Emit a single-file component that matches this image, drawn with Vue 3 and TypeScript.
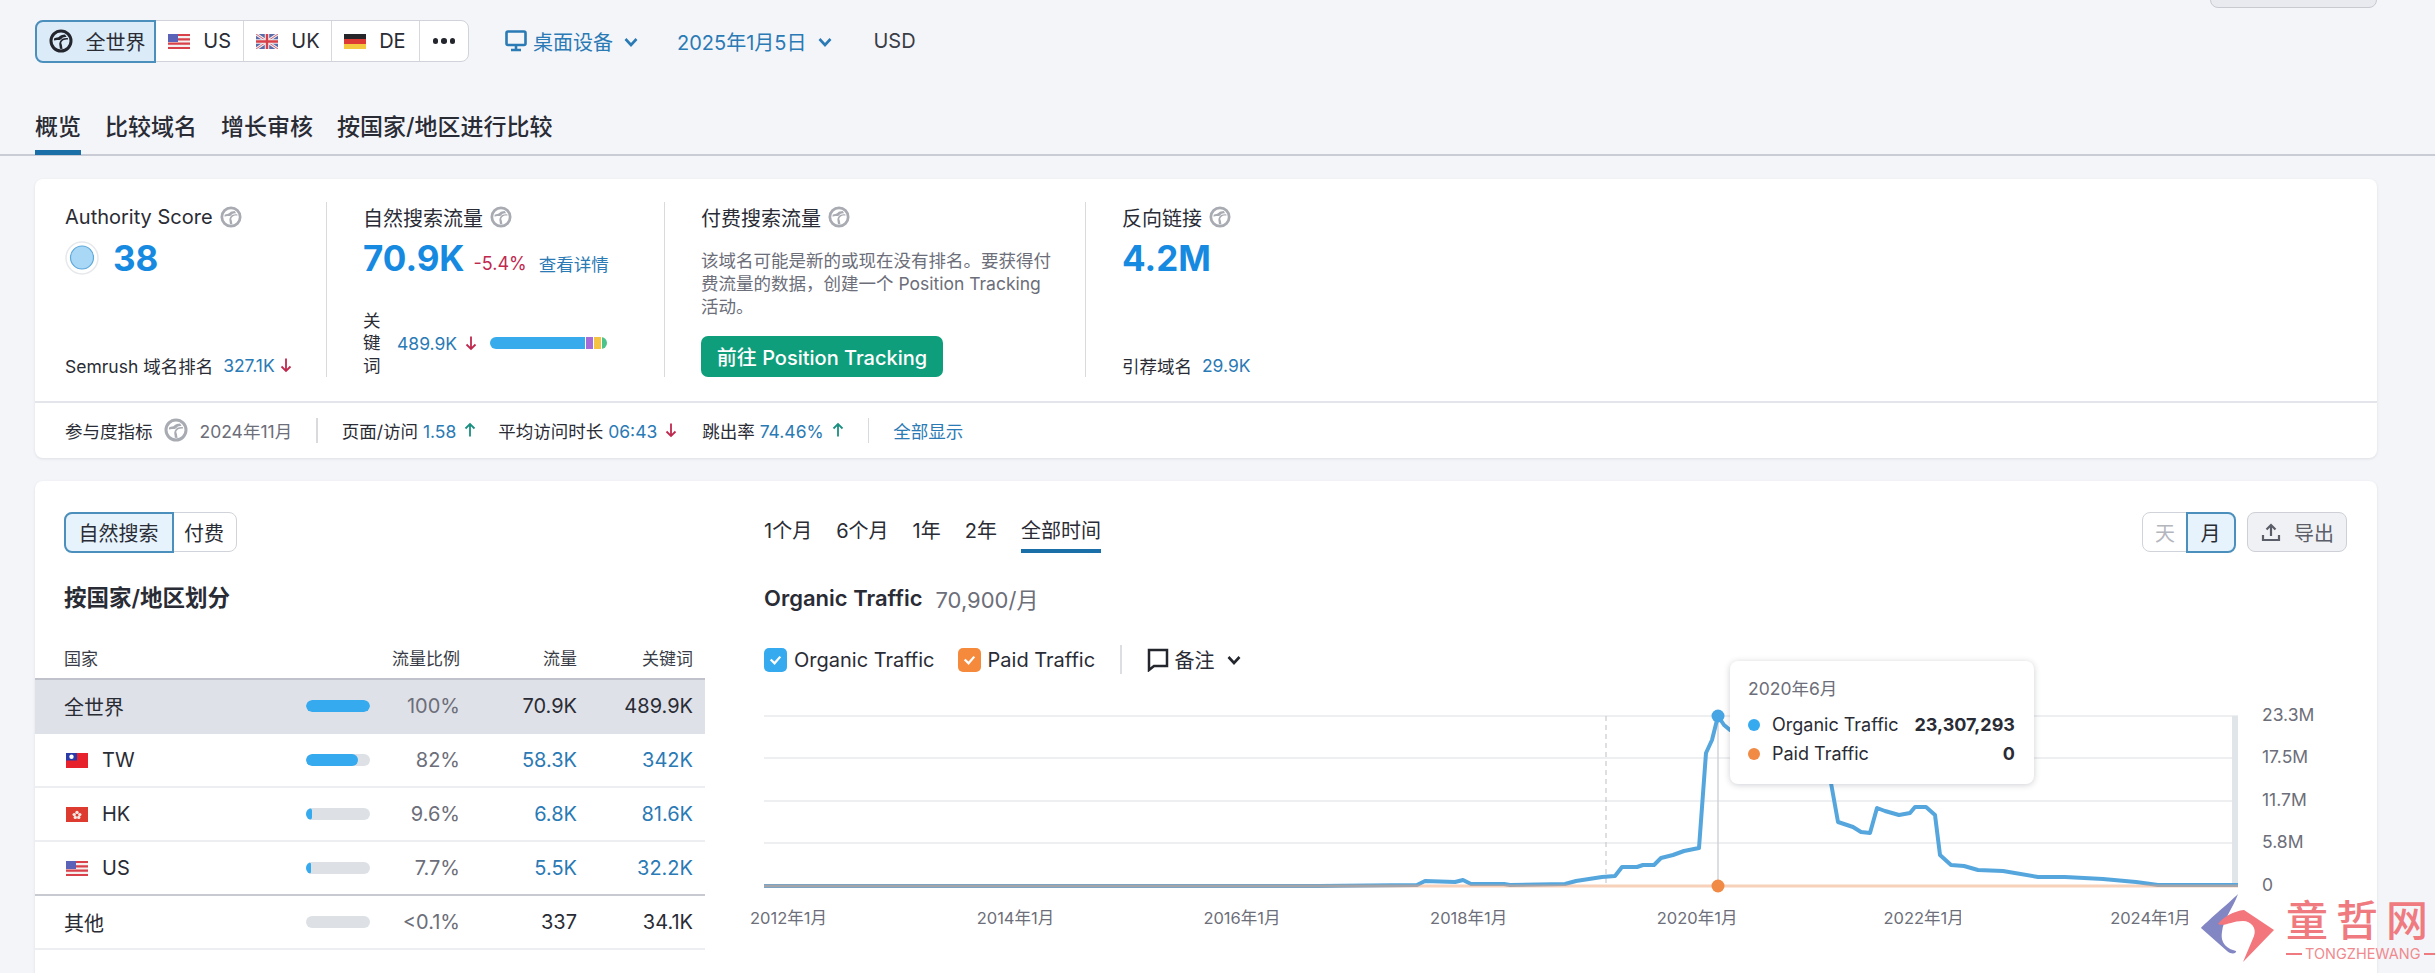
<script setup lang="ts">
interface Row { name: string; flag?: string; bar: number; pct: string; traffic: string; kw: string; link: boolean; cls?: string }

const regions = [
  { code: 'US', flag: 'us' },
  { code: 'UK', flag: 'uk' },
  { code: 'DE', flag: 'de' },
]

const rows: Row[] = [
  { name: '全世界', bar: 100, pct: '100%', traffic: '70.9K', kw: '489.9K', link: false, cls: 'selected' },
  { name: 'TW', flag: 'tw', bar: 82, pct: '82%', traffic: '58.3K', kw: '342K', link: true },
  { name: 'HK', flag: 'hk', bar: 9.6, pct: '9.6%', traffic: '6.8K', kw: '81.6K', link: true },
  { name: 'US', flag: 'us', bar: 7.7, pct: '7.7%', traffic: '5.5K', kw: '32.2K', link: true, cls: 'last' },
  { name: '其他', bar: 0, pct: '<0.1%', traffic: '337', kw: '34.1K', link: false },
]

const ranges = ['1个月', '6个月', '1年', '2年', '全部时间']

const ticks = [
  { label: '2012年1月', cut: false },
  { label: '2014年1月', cut: false },
  { label: '2016年1月', cut: false },
  { label: '2018年1月', cut: false },
  { label: '2020年1月', cut: true },
  { label: '2022年1月', cut: true },
  { label: '2024年1月', cut: true },
]

const yLabels = [
  { label: '23.3M', y: 15 },
  { label: '17.5M', y: 57 },
  { label: '11.7M', y: 100 },
  { label: '5.8M', y: 142 },
  { label: '0', y: 185 },
]
const grid = [16, 58, 101, 143]

// page coordinates of the organic series, moved into the chart's own space below
const organic: [number, number][] = [
  [764, 886], [1318, 886], [1417, 885], [1425, 881], [1455, 882], [1463, 880], [1471, 884],
  [1504, 884], [1510, 885], [1565, 884], [1576, 881], [1602, 877], [1615, 876], [1622, 867],
  [1637, 867], [1643, 865], [1654, 865], [1661, 858], [1673, 855], [1684, 851], [1699, 848],
  [1706, 753], [1712, 740], [1718, 716], [1724, 725], [1730, 730], [1780, 745], [1820, 760],
  [1831, 783], [1838, 822], [1853, 827], [1861, 832], [1870, 833], [1877, 808], [1885, 811],
  [1899, 815], [1910, 813], [1915, 807], [1926, 807], [1935, 815], [1940, 855], [1951, 865],
  [1964, 866], [1978, 870], [2003, 871], [2038, 877], [2065, 877], [2103, 879], [2136, 882],
  [2158, 885], [2238, 885],
]
const organicPath = 'M' + organic.map(([x, y]) => `${x - 764} ${y - 700}`).join('L')
</script>

<template>
  <div class="page">
    <svg class="defs" width="0" height="0" aria-hidden="true">
      <symbol id="globe" viewBox="0 0 24 24">
        <circle cx="12" cy="12" r="10" fill="none" stroke="currentColor" stroke-width="3" />
        <path d="M5 9.5c2.5-1.4 4-.4 5.6-2.2 1.4-1.6 3.200-1.200 5.400-1.800l1.600 2.500c-2 .2-3.500-.2-4.600 1.200-.8 1-2 2-4 1.800-1.600-.2-2.800.2-4 .6z" fill="currentColor" />
        <path d="M19 10.500c-2.500-.3-5 .2-6.500 2.500-.6 1 .2 2 .4 3l.6 4-2.600-.2-.6-4c-.4-2 1-4.800 3-6 2-1 4-1 5.600-.8z" fill="currentColor" />
      </symbol>
      <symbol id="us" viewBox="0 0 22 15">
        <rect width="22" height="15" fill="#f4f0f0" />
        <path d="M0 0h22v2.100H0zM0 4.300h22v2.100H0zM0 8.600h22v2.100H0zM0 12.900h22V15H0z" fill="#d8414a" />
        <rect width="10" height="8" fill="#5a63b8" />
      </symbol>
      <symbol id="uk" viewBox="0 0 22 15">
        <rect width="22" height="15" fill="#5b6aa8" />
        <path d="M0 0l22 15M22 0L0 15" stroke="#f1eef0" stroke-width="3" />
        <path d="M0 0l22 15M22 0L0 15" stroke="#d36a78" stroke-width="1" />
        <path d="M11 0v15M0 7.500h22" stroke="#f1eef0" stroke-width="4.500" />
        <path d="M11 0v15M0 7.500h22" stroke="#d8414a" stroke-width="2.400" />
      </symbol>
      <symbol id="de" viewBox="0 0 22 15">
        <rect width="22" height="5" fill="#26262a" />
        <rect y="5" width="22" height="5" fill="#dc3a32" />
        <rect y="10" width="22" height="5" fill="#f5c93f" />
      </symbol>
      <symbol id="tw" viewBox="0 0 22 15">
        <rect width="22" height="15" fill="#e8222c" />
        <rect width="11" height="7.500" fill="#2a3aa8" />
        <circle cx="5.500" cy="3.800" r="2.200" fill="#fff" />
      </symbol>
      <symbol id="hk" viewBox="0 0 22 15">
        <rect width="22" height="15" fill="#dd3a30" />
        <circle cx="11" cy="5.400" r="1.700" fill="#f7e6e2" />
        <circle cx="8.200" cy="7.600" r="1.700" fill="#f7e6e2" />
        <circle cx="13.800" cy="7.600" r="1.700" fill="#f7e6e2" />
        <circle cx="9.300" cy="10.400" r="1.700" fill="#f7e6e2" />
        <circle cx="12.700" cy="10.400" r="1.700" fill="#f7e6e2" />
      </symbol>
      <symbol id="down" viewBox="0 0 12 16">
        <path d="M6 1.500v12.500M1.500 9.500L6 14l4.500-4.500" fill="none" stroke="currentColor" stroke-width="1.800" />
      </symbol>
      <symbol id="chev" viewBox="0 0 16 12">
        <path d="M2.500 3l5.500 6 5.500-6" fill="none" stroke="currentColor" stroke-width="2.600" />
      </symbol>
    </svg>

    <header class="top">
      <h1 class="title">流量概览</h1>
      <div class="top-btn"></div>
    </header>

    <div class="filters">
      <div class="seg">
        <div class="seg-item active global">
          <svg class="globe-lg"><use href="#globe" /></svg>
          <span>全世界</span>
        </div>
        <div v-for="r in regions" :key="r.code" class="seg-item">
          <svg class="flag"><use :href="'#' + r.flag" /></svg>
          <span>{{ r.code }}</span>
        </div>
        <div class="seg-item more"><i></i><i></i><i></i></div>
      </div>
      <div class="drop device">
        <svg class="monitor" viewBox="0 0 22 22">
          <rect x="1.500" y="1.500" width="19" height="13.500" rx="1.500" fill="none" stroke="currentColor" stroke-width="2.600" />
          <path d="M11 15v4M6 20h10" stroke="currentColor" stroke-width="2.600" fill="none" />
        </svg>
        <span>桌面设备</span>
        <svg class="chev"><use href="#chev" /></svg>
      </div>
      <div class="drop date">
        <span>2025年1月5日</span>
        <svg class="chev"><use href="#chev" /></svg>
      </div>
      <span class="currency">USD</span>
    </div>

    <nav class="tabs">
      <a class="tab current">概览</a>
      <a class="tab">比较域名</a>
      <a class="tab">增长审核</a>
      <a class="tab">按国家/地区进行比较</a>
    </nav>

    <section class="card summary">
      <div class="metrics">
        <div class="metric m1">
          <div class="m-title">Authority Score<svg class="help"><use href="#globe" /></svg></div>
          <div class="m-value">
            <svg class="dial" viewBox="0 0 34 34">
              <circle cx="17" cy="17" r="16" fill="#fff" stroke="#e6e8ec" stroke-width="1.500" />
              <circle cx="17" cy="16.500" r="11.500" fill="#a8d8f6" stroke="#5fa8da" stroke-width="1.200" />
            </svg>
            <span class="big">38</span>
          </div>
          <div class="m-foot">Semrush 域名排名 <a>327.1K</a><svg class="arrow red"><use href="#down" /></svg></div>
        </div>

        <div class="metric m2">
          <div class="m-title">自然搜索流量<svg class="help"><use href="#globe" /></svg></div>
          <div class="m-value">
            <span class="big">70.9K</span>
            <span class="delta">-5.4%</span>
            <a class="details">查看详情</a>
          </div>
          <div class="kw-row">
            <span class="kw-label">关键词</span>
            <a>489.9K</a>
            <svg class="arrow red"><use href="#down" /></svg>
            <div class="stack"><i class="s-blue"></i><i class="s-purple"></i><i class="s-yellow"></i><i class="s-green"></i></div>
          </div>
        </div>

        <div class="metric m3">
          <div class="m-title">付费搜索流量<svg class="help"><use href="#globe" /></svg></div>
          <p class="m-note">该域名可能是新的或现在没有排名。要获得付费流量的数据，创建一个 Position Tracking 活动。</p>
          <button class="cta">前往 Position Tracking</button>
        </div>

        <div class="metric m4">
          <div class="m-title">反向链接<svg class="help"><use href="#globe" /></svg></div>
          <div class="m-value"><span class="big">4.2M</span></div>
          <div class="m-foot">引荐域名 <a>29.9K</a></div>
        </div>
      </div>

      <div class="engage">
        <span>参与度指标</span>
        <svg class="help wide"><use href="#globe" /></svg>
        <span class="muted">2024年11月</span>
        <i class="sep"></i>
        <span>页面/访问 <a>1.58</a></span>
        <svg class="arrow green up"><use href="#down" /></svg>
        <span class="gap1">平均访问时长 <a>06:43</a></span>
        <svg class="arrow red"><use href="#down" /></svg>
        <span class="gap2">跳出率 <a>74.46%</a></span>
        <svg class="arrow green up"><use href="#down" /></svg>
        <i class="sep"></i>
        <a>全部显示</a>
      </div>
    </section>

    <section class="card detail">
      <div class="left">
        <div class="head-pad">
          <div class="mini-seg">
            <div class="mini active">自然搜索</div>
            <div class="mini">付费</div>
          </div>
          <h2 class="sub">按国家/地区划分</h2>
        </div>
        <div class="table">
          <div class="tr thead">
            <span>国家</span><span></span><span class="num">流量比例</span><span class="num">流量</span><span class="num">关键词</span>
          </div>
          <div v-for="row in rows" :key="row.name + row.pct" class="tr" :class="row.cls">
            <span class="name"><svg v-if="row.flag" class="flag"><use :href="'#' + row.flag" /></svg>{{ row.name }}</span>
            <span class="track"><i :style="{ width: row.bar + '%' }"></i></span>
            <span class="num muted">{{ row.pct }}</span>
            <span class="num" :class="{ link: row.link }">{{ row.traffic }}</span>
            <span class="num" :class="{ link: row.link }">{{ row.kw }}</span>
          </div>
        </div>
      </div>

      <div class="right">
        <div class="r-head">
          <div class="ranges">
            <span v-for="(r, i) in ranges" :key="r" class="range" :class="{ on: i === 4 }">{{ r }}</span>
          </div>
          <div class="r-tools">
            <div class="mini-seg">
              <div class="mini off">天</div>
              <div class="mini active">月</div>
            </div>
            <button class="export">
              <svg viewBox="0 0 20 20" class="up-ic">
                <path d="M10 14V3M5.500 7.500L10 3l4.500 4.500M2 13v5h16v-5" fill="none" stroke="currentColor" stroke-width="2.200" />
              </svg>
              导出
            </button>
          </div>
        </div>

        <div class="c-title"><b>Organic Traffic</b><span>70,900/月</span></div>

        <div class="legend">
          <span class="box blue"><svg viewBox="0 0 24 24"><path d="M7 12l4 4 6-7" fill="none" stroke="#fff" stroke-width="2.400" /></svg></span>
          <span class="l-text">Organic Traffic</span>
          <span class="box orange"><svg viewBox="0 0 24 24"><path d="M7 12l4 4 6-7" fill="none" stroke="#fff" stroke-width="2.400" /></svg></span>
          <span class="l-text">Paid Traffic</span>
          <i class="l-sep"></i>
          <svg class="note" viewBox="0 0 22 24">
            <path d="M2 2h18v16H7l-5 4z" fill="none" stroke="#24262e" stroke-width="2.500" />
          </svg>
          <span class="note-t">备注</span>
          <svg class="chev dark"><use href="#chev" /></svg>
        </div>

        <div class="chart">
          <svg class="plot" width="1583" height="200" viewBox="0 0 1583 200">
            <line v-for="g in grid" :key="g" x1="0" :y1="g" x2="1474" :y2="g" stroke="#e9eaed" stroke-width="1.500" />
            <rect x="1468" y="16" width="6" height="170" fill="#dfe5e9" />
            <line x1="842" y1="16" x2="842" y2="186" stroke="#c8cad0" stroke-width="1.200" stroke-dasharray="5 4" />
            <line x1="954" y1="16" x2="954" y2="186" stroke="#cfd1d6" stroke-width="1.400" />
            <path :d="organicPath" fill="none" stroke="#56a6de" stroke-width="4" stroke-linejoin="round" />
            <line x1="0" y1="186" x2="1474" y2="186" stroke="#f2a477" stroke-width="3" stroke-opacity="0.5" />
            <circle cx="954" cy="16" r="6.500" fill="#48a5e4" />
            <circle cx="954" cy="186" r="6.500" fill="#f08a45" />
            <text v-for="y in yLabels" :key="y.label" x="1498" :y="y.y + 6" class="y-text">{{ y.label }}</text>
          </svg>
          <div class="tooltip">
            <div class="t-date">2020年6月</div>
            <div class="t-row"><i class="dot b"></i><span>Organic Traffic</span><b>23,307,293</b></div>
            <div class="t-row"><i class="dot o"></i><span>Paid Traffic</span><b>0</b></div>
          </div>
        </div>

        <div class="axis">
          <span v-for="t in ticks" :key="t.label" class="tick" :class="{ cut: t.cut }">{{ t.label }}</span>
        </div>
      </div>
    </section>

    <div class="mark">
      <svg class="mark-logo" viewBox="0 0 76 72">
        <path d="M38 2C30 10 4 32 1 36l26 23c6 5 10 1 9 0-8-2-16-7-14-19C23 28 33 16 38 2z" fill="#8287c4" />
        <path d="M18 32c5-7 16-13 26-14l30 20-31 32 11-26c3-8-3-15-11-15-12 0-18 6-25 3z" fill="#f2767c" />
      </svg>
      <div class="mark-text">
        <div class="mark-cn">童哲网</div>
        <div class="mark-en"><i></i>TONGZHEWANG<i></i></div>
      </div>
    </div>
  </div>
</template>

<style>
html, body { margin: 0; background: #f4f5f9; }
</style>

<style scoped>
.page {
  position: relative;
  width: 2435px;
  height: 973px;
  overflow: hidden;
  background: #f4f5f9;
  color: #2a2c35;
  font-family: Inter, "Noto Sans CJK SC", sans-serif;
  font-size: 17.5px;
}
.defs { position: absolute; }
a { color: #2a7ab5; }

.top {
  display: flex;
  justify-content: space-between;
  height: 8px;
  padding: 0 58px 0 48px;
}
.title {
  margin: -29px 0 0;
  font-size: 25px;
  line-height: 34px;
  font-weight: 600;
}
.top-btn {
  width: 167px;
  height: 30px;
  margin-top: -22px;
  background: #e9eaef;
  border: 1.500px solid #c8cad2;
  border-radius: 8px;
  box-sizing: border-box;
}

.filters {
  display: flex;
  align-items: center;
  height: 42px;
  margin: 12px 0 0 35px;
  font-size: 20px;
}
.seg {
  display: flex;
  width: 434px;
  height: 42px;
  box-sizing: border-box;
  background: #fff;
  border: 1.500px solid #d0d3d9;
  border-radius: 8px;
}
.seg-item {
  display: flex;
  align-items: center;
  gap: 13px;
  width: 88px;
  box-sizing: border-box;
  padding-left: 12px;
  border-right: 1.500px solid #d6d8de;
}
.seg-item.active {
  width: 122px;
  margin: -1.500px 0 -1.500px -1.500px;
  padding-left: 12px;
  background: #dcebf8;
  border: 2px solid #4b8fbd;
  border-radius: 8px 0 0 8px;
}
.globe-lg { width: 24px; height: 24px; color: #24262e; }
.flag { width: 22px; height: 15px; flex: none; }
.seg-item.more {
  width: 48px;
  justify-content: center;
  gap: 3px;
  padding: 0;
  border: 0;
}
.more i {
  width: 5.500px;
  height: 5.500px;
  border-radius: 50%;
  background: #24262e;
}
.drop {
  display: flex;
  align-items: center;
  color: #2a7ab5;
}
.device { margin-left: 36px; gap: 6px; }
.date { margin-left: 38px; gap: 11px; }
.monitor { width: 22px; height: 22px; }
.chev { width: 16px; height: 12px; margin-top: 1px; }
.device .chev { margin-left: 4px; }
.currency { margin-left: 40px; color: #3a3d47; }

.tabs {
  display: flex;
  gap: 24px;
  height: 55px;
  margin-top: 37px;
  padding-left: 35px;
  border-bottom: 2px solid #c9ccd4;
}
.tab {
  height: 56px;
  box-sizing: border-box;
  padding-top: 13px;
  color: #2a2c35;
  font-size: 23px;
  line-height: 30px;
  font-weight: 500;
}
.tab.current { border-bottom: 5px solid #1b6fa8; }

.card {
  margin: 23px 58px 0 35px;
  background: #fff;
  border-radius: 8px;
  box-shadow: 0 1px 3px rgba(30, 35, 60, 0.1);
}
.summary { height: 279px; }
.metrics {
  display: grid;
  grid-template-columns: 291px 338px 421px 1fr;
  height: 175px;
  padding: 23px 0 24px;
  border-bottom: 2px solid #e3e5ea;
}
.metric {
  display: flex;
  flex-direction: column;
  padding-left: 36px;
  border-left: 1.500px solid #d8dade;
}
.m1 { padding-left: 30px; border-left: 0; }
.m-title {
  display: flex;
  align-items: center;
  height: 30px;
  font-size: 20px;
}
.help {
  width: 22px;
  height: 22px;
  margin-left: 7px;
  color: #a9abb3;
}
.m-value {
  display: flex;
  align-items: center;
  height: 40px;
  margin-top: 6px;
}
.big {
  color: #168ae0;
  font-size: 35px;
  line-height: 40px;
  font-weight: 700;
}
.dial { width: 34px; height: 34px; margin-right: 14px; }
.delta {
  margin: 10px 0 0 9px;
  color: #c0294e;
  font-size: 18px;
}
.details {
  margin: 10px 0 0 12px;
  font-size: 17.500px;
}
.m-foot {
  display: flex;
  align-items: center;
  gap: 5px;
  margin-top: auto;
  height: 24px;
  font-size: 17.500px;
  white-space: pre;
}
.arrow { width: 12px; height: 16px; flex: none; }
.red { color: #c0294e; }
.green { color: #1b8f80; }
.up { transform: rotate(180deg); }
.kw-row {
  display: flex;
  align-items: center;
  margin-top: auto;
  font-size: 17.500px;
}
.kw-label {
  width: 18px;
  margin-right: 16px;
  line-height: 22.500px;
}
.kw-row .arrow { margin-left: 8px; }
.stack {
  display: flex;
  gap: 1px;
  width: 117px;
  height: 12px;
  margin-left: 13px;
  overflow: hidden;
  border-radius: 6px;
}
.stack i { display: block; height: 100%; }
.s-blue { width: 96px; background: #38abed; }
.s-purple { width: 7px; background: #a66bd6; }
.s-yellow { width: 7px; background: #f5c343; }
.s-green { width: 5px; background: #4cc38a; }
.m-note {
  width: 352px;
  margin: 17px 0 0;
  color: #6c6e79;
  font-size: 17.500px;
  line-height: 23px;
}
.cta {
  width: 242px;
  height: 41px;
  margin-top: auto;
  padding: 0;
  color: #fff;
  background: #0f9e7b;
  border: 0;
  border-radius: 7px;
  font-family: inherit;
  font-size: 20px;
  font-weight: 500;
}
.engage {
  display: flex;
  align-items: center;
  height: 54px;
  padding-left: 30px;
  font-size: 17.500px;
  white-space: pre;
}
.muted { color: #6c6e79; }
.help.wide { width: 24px; height: 24px; margin: 0 12px 0 11px; }
.sep {
  width: 1.500px;
  height: 25px;
  margin: 0 24px;
  background: #d8dade;
}
.engage .arrow { margin-left: 8px; }
.gap1 { margin-left: 22px; }
.gap2 { margin-left: 25px; }

.detail {
  display: flex;
  height: 520px;
  padding-top: 31px;
  box-sizing: content-box;
}
.left { width: 670px; flex: none; }
.head-pad { padding-left: 29px; }
.mini-seg {
  display: inline-flex;
  height: 40px;
  box-sizing: border-box;
  background: #fff;
  border: 1.500px solid #d0d3d9;
  border-radius: 8px;
  font-size: 20px;
}
.mini {
  display: flex;
  align-items: center;
  padding: 0 12px;
}
.mini.active {
  margin: -1.500px;
  background: #e6f3fc;
  border: 2px solid #4b8fbd;
  border-radius: 8px 0 0 8px;
  padding: 0 13px;
}
.mini.off { color: #b4b6bd; }
.r-tools .mini.active { border-radius: 0 8px 8px 0; }
.sub {
  height: 30px;
  margin: 31px 0 0;
  font-size: 22.500px;
  line-height: 30px;
  font-weight: 600;
}
.table { margin-top: 23px; }
.tr {
  display: grid;
  grid-template-columns: 242px 64px 90px 117px 116px;
  align-items: center;
  height: 54px;
  box-sizing: border-box;
  padding: 0 12px 0 29px;
  border-bottom: 2px solid #eceef1;
  font-size: 20px;
}
.tr.thead {
  height: 44px;
  font-size: 17px;
  color: #3a3d47;
  border-bottom: 2px solid #bfc2ca;
}
.tr.selected { background: #dfe1e8; border-bottom-color: #dfe1e8; }
.tr.last { border-bottom-color: #c8cad1; }
.num { text-align: right; }
.link { color: #2a7ab5; }
.name { display: flex; align-items: center; gap: 14px; padding-left: 2px; }
.tr.selected .name, .tr:last-child .name { padding-left: 0; }
.track {
  display: block;
  height: 12px;
  overflow: hidden;
  background: #dde1e5;
  border-radius: 6px;
}
.track i {
  display: block;
  height: 100%;
  background: #36aaef;
  border-radius: 6px;
}

.right {
  width: 1583px;
  margin-left: 59px;
}
.r-head {
  display: flex;
  justify-content: space-between;
  height: 40px;
}
.ranges { display: flex; gap: 24px; font-size: 20px; }
.range { height: 37px; line-height: 38px; box-sizing: content-box; }
.range.on { height: 37px; border-bottom: 4px solid #1b6fa8; }
.r-tools { display: flex; gap: 12px; }
.export {
  display: flex;
  align-items: center;
  gap: 13px;
  width: 100px;
  height: 40px;
  padding: 0 0 0 13px;
  color: #5b5e69;
  background: #f0f1f4;
  border: 1.500px solid #cdd0d6;
  border-radius: 8px;
  font-family: inherit;
  font-size: 20px;
}
.up-ic { width: 20px; height: 20px; }
.c-title {
  display: flex;
  align-items: center;
  gap: 13px;
  height: 30px;
  margin-top: 31px;
  font-size: 22px;
}
.c-title b { font-weight: 600; }
.c-title span { color: #6c6e79; }
.legend {
  display: flex;
  align-items: center;
  height: 29px;
  margin-top: 32px;
  font-size: 20px;
}
.box {
  display: block;
  width: 23px;
  height: 24px;
  border-radius: 5px;
}
.box svg { display: block; }
.box.blue { background: #36aaef; }
.box.orange { background: #f58a3c; }
.l-text { margin: 0 23px 0 7px; }
.l-text + .box + .l-text { margin-right: 0; }
.l-sep {
  width: 1.500px;
  height: 29px;
  margin: 0 25px;
  background: #dcdee2;
}
.note { width: 22px; height: 24px; }
.note-t { margin-left: 6px; }
.chev.dark { margin-left: 11px; color: #24262e; }
.chart {
  position: relative;
  height: 200px;
  margin-top: 26px;
}
.plot { display: block; }
.y-text { fill: #6c6e79; font-size: 17.500px; }
.tooltip {
  position: absolute;
  left: 966px;
  top: -39px;
  width: 304px;
  height: 123px;
  box-sizing: border-box;
  padding: 16px 19px 0 18px;
  background: #fff;
  border-radius: 8px;
  box-shadow: 0 1px 6px rgba(30, 35, 60, 0.22);
  font-size: 18px;
}
.t-date { height: 24px; color: #6c6e79; font-size: 17.500px; line-height: 24px; }
.t-row {
  display: flex;
  align-items: center;
  height: 29px;
  margin-top: 9px;
}
.t-row + .t-row { margin-top: 0; }
.t-row b { margin-left: auto; font-weight: 700; }
.dot { width: 12px; height: 12px; margin-right: 12px; border-radius: 50%; }
.dot.b { background: #36aaef; }
.dot.o { background: #f08a45; }
.axis {
  display: flex;
  gap: 146.700px;
  margin: 6px 0 0 -14px;
  height: 24px;
  line-height: 24px;
  color: #6c6e79;
  font-size: 16.500px;
  white-space: nowrap;
}
.tick { display: block; width: 80px; }
.tick.cut { overflow: hidden; width: 78px; margin-right: 2px; }

.mark {
  position: absolute;
  left: 2200px;
  top: 892px;
  display: flex;
  pointer-events: none;
}
.mark-logo { width: 76px; height: 72px; }
.mark-text { margin-left: 10px; }
.mark-cn {
  color: #ef7b80;
  font-family: "Noto Sans CJK SC", sans-serif;
  font-size: 42px;
  line-height: 52px;
  letter-spacing: 8px;
  font-weight: 500;
}
.mark-en {
  display: flex;
  align-items: center;
  gap: 3px;
  color: #ef8a8e;
  font-size: 14.500px;
  line-height: 20px;
}
.mark-en i {
  width: 16px;
  height: 2.500px;
  background: #ef7b80;
}
</style>
